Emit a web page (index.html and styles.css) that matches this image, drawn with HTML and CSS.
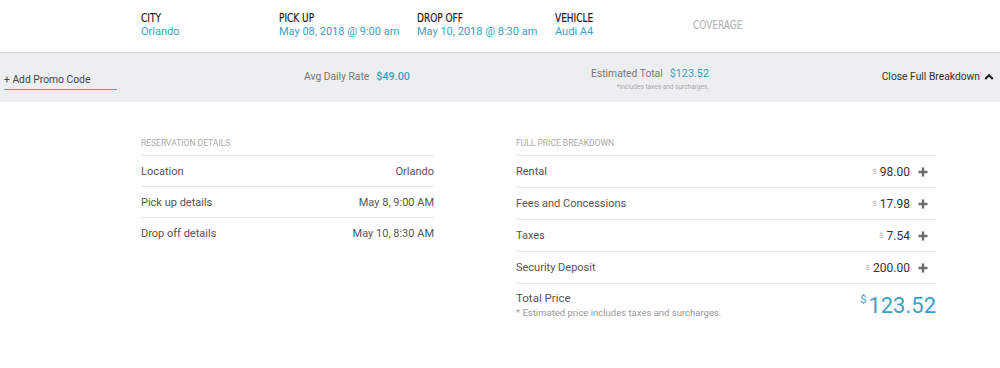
FILE: index.html
```html
<!DOCTYPE html>
<html>
<head>
<meta charset="utf-8">
<link rel="stylesheet" href="styles.css">
</head>
<body>
<header class="steps">
  <div class="step"><div class="step-label">CITY</div><div class="step-value">Orlando</div></div>
  <div class="step"><div class="step-label">PICK UP</div><div class="step-value">May 08, 2018 @ 9:00 am</div></div>
  <div class="step"><div class="step-label">DROP OFF</div><div class="step-value">May 10, 2018 @ 8:30 am</div></div>
  <div class="step"><div class="step-label">VEHICLE</div><div class="step-value">Audi A4</div></div>
  <div class="step step-muted"><div class="step-label">COVERAGE</div></div>
</header>

<section class="bar">
  <div class="promo">+ Add Promo Code</div>
  <div class="avg"><span class="bar-label">Avg Daily Rate</span><span class="bar-amount">$49.00</span></div>
  <div class="est">
    <div><span class="bar-label">Estimated Total</span><span class="bar-amount">$123.52</span></div>
    <div class="est-note">*Includes taxes and surcharges.</div>
  </div>
  <div class="close">Close Full Breakdown
    <svg class="caret" width="10" height="7" viewBox="0 0 10 7"><path d="M1.2 6 L5 2.2 L8.8 6" fill="none" stroke="#222" stroke-width="2.2"/></svg>
  </div>
</section>

<main class="details">
  <div class="col col-left">
    <div class="col-title">RESERVATION DETAILS</div>
    <div class="row"><span>Location</span><span>Orlando</span></div>
    <div class="row"><span>Pick up details</span><span>May 8, 9:00 AM</span></div>
    <div class="row row-last"><span>Drop off details</span><span>May 10, 8:30 AM</span></div>
  </div>
  <div class="col col-right">
    <div class="col-title">FULL PRICE BREAKDOWN</div>
    <div class="prow"><span>Rental</span><span class="price"><span class="cur">$</span>98.00<svg class="plus" width="10" height="10" viewBox="0 0 10 10"><path d="M5 0.5V9.5M0.5 5H9.5" stroke="#6b6b6b" stroke-width="2.4"/></svg></span></div>
    <div class="prow"><span>Fees and Concessions</span><span class="price"><span class="cur">$</span>17.98<svg class="plus" width="10" height="10" viewBox="0 0 10 10"><path d="M5 0.5V9.5M0.5 5H9.5" stroke="#6b6b6b" stroke-width="2.4"/></svg></span></div>
    <div class="prow"><span>Taxes</span><span class="price"><span class="cur">$</span>7.54<svg class="plus" width="10" height="10" viewBox="0 0 10 10"><path d="M5 0.5V9.5M0.5 5H9.5" stroke="#6b6b6b" stroke-width="2.4"/></svg></span></div>
    <div class="prow"><span>Security Deposit</span><span class="price"><span class="cur">$</span>200.00<svg class="plus" width="10" height="10" viewBox="0 0 10 10"><path d="M5 0.5V9.5M0.5 5H9.5" stroke="#6b6b6b" stroke-width="2.4"/></svg></span></div>
    <div class="total">
      <div>
        <div class="total-label">Total Price</div>
        <div class="total-note">* Estimated price includes taxes and surcharges.</div>
      </div>
      <div class="total-amount"><span class="total-cur">$</span>123.52</div>
    </div>
  </div>
</main>
</body>
</html>
```

FILE: styles.css
```css
* { box-sizing: border-box; }
html, body { margin: 0; padding: 0; background: #fff; }
body {
  font-family: Roboto, "Noto Sans", sans-serif;
  color: #555;
  width: 1000px;
  height: 368px;
  overflow: hidden;
}

.steps {
  display: flex;
  height: 52px;
  padding-left: 141px;
  padding-top: 11px;
}
.step { width: 138px; }
.step-label {
  font-family: "Liberation Sans Narrow", "DejaVu Sans Condensed", sans-serif;
  font-size: 12.5px;
  line-height: 13px;
  color: #1a1a1a;
  transform: scaleX(0.8);
  transform-origin: left center;
  -webkit-text-stroke: 0.2px #1a1a1a;
}
.step-value {
  font-size: 11px;
  line-height: 13px;
  margin-top: 1px;
  color: #3d9fc3;
}
.step-muted { padding-top: 7px; }
.step-muted .step-label { color: #b8b8b8; -webkit-text-stroke: 0.2px #b8b8b8; }

.bar {
  display: flex;
  align-items: center;
  height: 50px;
  background: #eceef0;
  border-top: 1px solid #d2d4d6;
  font-size: 10.3px;
}
.promo {
  margin-left: 4px;
  width: 113px;
  margin-top: 8px;
  padding-left: 0;
  line-height: 14px;
  padding-bottom: 2px;
  border-bottom: 1px solid #4aa3bf;
  color: #444;
}
.avg {
  margin-left: 187px;
  width: 205px;
  margin-top: -2px;
}
.bar-label { color: #777; }
.bar-amount { color: #3d9fc3; margin-left: 7px; font-size: 10.8px; }
.avg .bar-amount { font-weight: 500; }
.est {
  width: 200px;
  text-align: right;
  margin-top: 2px;
}
.est-note {
  font-size: 6.5px;
  color: #aaa;
  margin-top: 3px;
}
.close {
  margin-left: auto;
  padding-right: 6px;
  color: #333;
  display: flex;
  align-items: center;
  gap: 4px;
  margin-top: -2px;
}
.caret { display: block; }

.details {
  display: flex;
  padding-left: 141px;
  padding-top: 34px;
}
.col-title {
  font-size: 8.5px;
  line-height: 14px;
  color: #aaa;
  padding-bottom: 5px;
  border-bottom: 1px solid #e6e6e6;
}
.col-left { width: 293px; }
.col-right { width: 420px; margin-left: 82px; }
.row {
  display: flex;
  justify-content: space-between;
  align-items: center;
  height: 31px;
  font-size: 11px;
  border-bottom: 1px solid #e6e6e6;
  color: #555;
}
.row-last { border-bottom: none; }
.prow {
  display: flex;
  justify-content: space-between;
  align-items: center;
  height: 32px;
  font-size: 11px;
  border-bottom: 1px solid #e6e6e6;
  color: #555;
}
.price {
  display: flex;
  align-items: center;
  font-size: 12px;
  color: #333;
  padding-right: 8px;
}
.cur {
  font-size: 8px;
  color: #aaa;
  margin-right: 3px;
}
.plus { margin-left: 8px; display: block; }
.total {
  display: flex;
  justify-content: space-between;
  align-items: center;
  padding-top: 6px;
}
.total-label { font-size: 11.5px; line-height: 15px; color: #555; }
.total-note { font-size: 9.5px; line-height: 13px; color: #999; }
.total-amount {
  font-size: 22px;
  color: #3d9fc3;
  display: flex;
  align-items: flex-start;
  line-height: 26px;
  margin-top: 3px;
}
.total-cur { font-size: 11px; line-height: 14px; margin-right: 2px; }
```
